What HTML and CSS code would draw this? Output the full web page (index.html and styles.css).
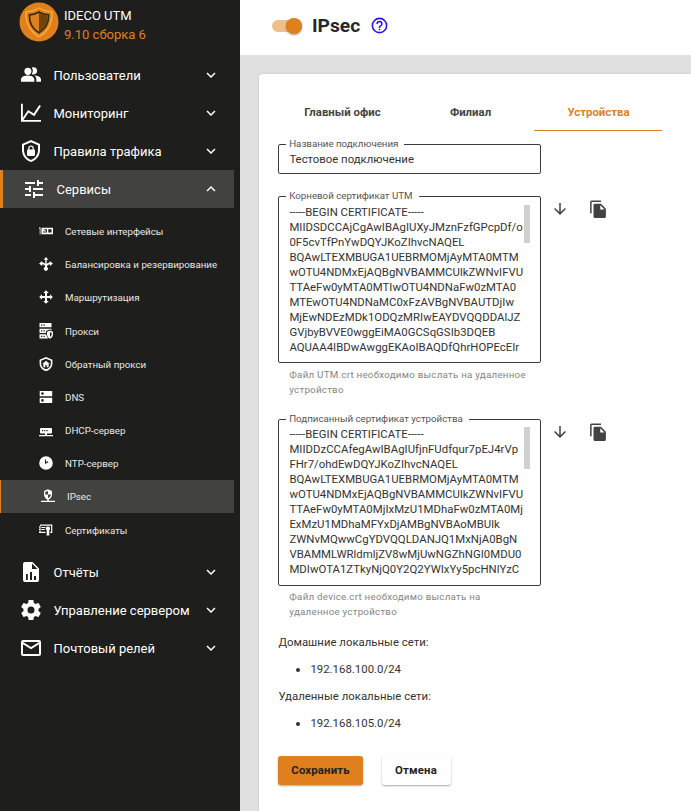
FILE: index.html
```html
<!DOCTYPE html>
<html lang="ru">
<head>
<meta charset="utf-8">
<title>IPsec</title>
<link rel="stylesheet" href="styles.css">
</head>
<body>
<svg width="0" height="0" class="defs">
  <symbol id="down" viewBox="0 0 24 24"><path d="M7.41 8.59 12 13.17l4.59-4.58L18 10l-6 6-6-6z"/></symbol>
  <symbol id="up" viewBox="0 0 24 24"><path d="M7.41 15.41 12 10.83l4.59 4.58L18 14l-6-6-6 6z"/></symbol>
  <symbol id="arrow" viewBox="0 0 24 24"><path d="M11 4h2v12l5.500-5.500 1.420 1.420L12 19.840l-7.920-7.920L5.500 10.500 11 16z"/></symbol>
  <symbol id="copy" viewBox="0 0 24 24"><path d="M16 .500H3.500a2 2 0 0 0-2 2v15h2v-15H16z"/><path fill-rule="evenodd" d="M8 5h8l6.500 6.500V22a2 2 0 0 1-2 2H8a2 2 0 0 1-2-2V7c0-1.100.9-2 2-2zm7 7.500h5.500L15 7z"/></symbol>
</svg>
<div class="app">
  <aside class="sidebar">
    <header class="brand">
      <svg class="logo" viewBox="0 0 40 40"><circle cx="20" cy="20" r="19.500" fill="#e07f1d"/><path d="M20 6c4 2.500 8 3.600 13 3.800.6 11.200-3.500 19.200-13 25C10.500 29 6.400 21 7 9.800 12 9.600 16 8.500 20 6z" fill="#e07f1d" stroke="#fbad35" stroke-width="1.400"/><path d="M20 10c3 1.800 6 2.700 9.600 2.900.3 8-2.500 13.700-9.600 17.900-7.100-4.200-9.900-9.900-9.600-17.900C14 12.700 17 11.800 20 10z" fill="#e07f1d" stroke="#302818" stroke-width="1.600"/><path d="M20 10.800c2.700 1.500 5.500 2.500 8.800 2.800.2 7.300-2.300 12.400-8.800 16.300z" fill="#704407"/></svg>
      <div class="brand-text"><div>IDECO UTM</div><div class="version">9.10 сборка 6</div></div>
    </header>
    <nav>
      <a class="item"><svg class="icon" viewBox="0 0 24 24"><path d="M16 17v3H0v-3s0-4.500 8-4.500S16 17 16 17M12.500 7A4.300 4.300 0 1 1 4 7a4.300 4.300 0 0 1 8.500 0m3.440 5.500A5.600 5.600 0 0 1 18.400 17v3H24v-3s0-4-8.060-4.500M15 2.700c-.8 0-1.500.2-2.100.6a6.300 6.300 0 0 1 0 7.400c.6.4 1.300.6 2.100.6a4.300 4.300 0 0 0 0-8.600z"/></svg><span>Пользователи</span><svg class="chev"><use href="#down"/></svg></a>
      <a class="item"><svg class="icon" viewBox="0 0 24 24"><path d="M0 1h2.200v16.800l6.300-9.400 6.700 4.300L22 2.400l1.900 1.200-7.900 12.200-6.900-4.300L3 20.300h21v2.200H0z"/></svg><span>Мониторинг</span><svg class="chev"><use href="#down"/></svg></a>
      <a class="item"><svg class="icon tall" viewBox="0 0 24 24"><path d="M12 1 3 5v6c0 5.550 3.840 10.740 9 12 5.160-1.260 9-6.450 9-12V5zm0 2.200 7 3.100V11c0 4.500-3 8.700-7 9.900C8 19.700 5 15.500 5 11V6.300z"/><path d="M12 6.500A2.900 2.900 0 0 0 9.200 9.400v1.100c-.7 0-1.200.5-1.200 1.100v4.200c0 .7.500 1.200 1.200 1.200h5.600c.7 0 1.200-.5 1.200-1.200v-4.200c0-.6-.5-1.100-1.200-1.100V9.400A2.900 2.900 0 0 0 12 6.500m0 1.300c.8 0 1.500.5 1.500 1.400v1.300h-3V9.200c0-.9.700-1.400 1.500-1.400"/></svg><span>Правила трафика</span><svg class="chev"><use href="#down"/></svg></a>
      <a class="item active"><svg class="icon tall" viewBox="0 0 24 24"><path d="M3 17v2h6v-2zM3 5v2h10V5zm10 16v-2h8v-2h-8v-2h-2v6zM7 9v2H3v2h4v2h2V9zm14 4v-2H11v2zm-6-4h2V7h4V5h-4V3h-2z"/></svg><span>Сервисы</span><svg class="chev"><use href="#up"/></svg></a>
      <div class="sub">
        <a class="subitem"><svg class="sicon" viewBox="0 0 14 14"><path fill-rule="evenodd" d="M0 3.500h1.500v7H.7v-6H0zM2.500 3.800H14v6.400H2.500zM4 5.300v3.200h4V5.300zm5.300 0v3.200h3.200V5.300z"/><path d="M4 5.300h1.500v1.200h1.800v1H4z"/></svg><span>Сетевые интерфейсы</span></a>
        <a class="subitem"><svg class="sicon" viewBox="0 0 14 14"><path d="m7 0 2.300 2.700H7.700v2.600L7.500 7Q8.700 5.700 10.700 5.600V4l3.200 2.400L11 9V7.300Q8.200 7.500 7.800 9.900a2 2 0 1 1-1.800 0Q6.200 7.500 3.200 7.300V9L.1 6.400 3.200 4v1.600q1.900.1 3.100 1.100V2.700H4.700z"/></svg><span>Балансировка и резервирование</span></a>
        <a class="subitem"><svg class="sicon" viewBox="0 0 14 14"><path d="m7 .2 2.700 2.700H8v3.200h3.100V4.300L13.800 7l-2.700 2.700V7.900H8v3.200h1.700L7 13.800l-2.700-2.700H6V7.900H2.900v1.800L.2 7l2.700-2.700v1.800H6V2.900H4.300z"/></svg><span>Маршрутизация</span></a>
        <a class="subitem"><svg class="sicon server" viewBox="0 0 14 16"><path fill-rule="evenodd" d="M.5 0h12v4.300H.5zM2 1.500v1.200h1.300V1.500zm2.500 0v1.200h1.300V1.500zM.5 5.700h12V7l-2-.5L7 8v2H.5zM2 7.200v1.200h1.300V7.200zm2.500 0v1.200h1.300V7.200zM.5 11.300h6.700c.3 1.700 1 3 2 4.200H.5zM2 12.800V14h1.300v-1.200zm2.500 0V14h1.300v-1.200z"/><path fill-rule="evenodd" d="m11 7.500 3 1.300v2.400c0 2-1.200 3.600-3 4.500-1.800-.9-3-2.500-3-4.500V8.800zm0 1.700v4.700c1.200-.7 1.700-1.700 1.700-2.800V9.800z"/></svg><span>Прокси</span></a>
        <a class="subitem"><svg class="sicon server" viewBox="0 0 24 24"><path fill-rule="evenodd" d="M12 0 1 4.500V11c0 6 4.500 11.500 11 13 6.500-1.500 11-7 11-13V4.500zm0 3 8.300 3.400V11c0 4.700-3.400 8.900-8.300 10.200C7.100 19.900 3.700 15.700 3.700 11V6.400z"/><path d="M12 6.500 5.500 12h2v5.500h3.300v-3.600h2.400v3.600h3.300V12h2z"/></svg><span>Обратный прокси</span></a>
        <a class="subitem"><svg class="sicon" viewBox="0 0 14 14"><path fill-rule="evenodd" d="M.7 1h12.500v5.200H.7zM.7 7.800h12.500V13H.7zM3.500 2.200a1.300 1.300 0 1 0 0 2.600 1.300 1.300 0 0 0 0-2.600zm0 6.900a1.300 1.300 0 1 0 0 2.600 1.300 1.300 0 0 0 0-2.600z"/></svg><span>DNS</span></a>
        <a class="subitem"><svg class="sicon" viewBox="0 0 14 14"><path fill-rule="evenodd" d="M2 5h10q1 0 1 1v3.500q0 1-1 1H8v1.400h6v1.300H0v-1.300h6v-1.400H2q-1 0-1-1V6q0-1 1-1zm1 2v1.300h1.200V7zm2.200 0v1.300h1.200V7zm2.200 0v1.300h1.200V7z"/></svg><span>DHCP-сервер</span></a>
        <a class="subitem"><svg class="sicon" viewBox="0 0 14 14"><path fill-rule="evenodd" d="M7 .2a6.800 6.800 0 1 0 0 13.600A6.800 6.800 0 0 0 7 .2zM6 3.500h1.100v2.800l1.700-1 .7 1L6 8z"/></svg><span>NTP-сервер</span></a>
        <a class="subitem active"><svg class="sicon" viewBox="0 0 14 14"><path d="M7 .3 3 1.900v3.300c0 2.500 1.500 4.400 3.300 5.200v1.300H0V13h14v-1.300H7.700v-1.300C9.500 9.600 11 7.700 11 5.200V1.900zM7 2v3.500h2.800C9.600 7.300 8.600 8.500 7 9.200V5.500H4.200V3z" fill-rule="evenodd"/></svg><span>IPsec</span></a>
        <a class="subitem"><svg class="sicon" viewBox="0 0 14 14"><path fill-rule="evenodd" d="M1 1.500h12.300V10h-2V8.700h.8v-6H1.500v6h5V10H0V8.500h.7V7H0V5.800h.7V4.500H0V3.300h1z"/><path d="M2.300 4h4v1h-4zm0 2h3.500v1H2.300zM9 3.500a2 2 0 0 1 1.300 3.600v6L9 12l-1.300 1.200v-6A2 2 0 0 1 9 3.500z"/></svg><span>Сертификаты</span></a>
      </div>
      <a class="item"><svg class="icon" viewBox="0 0 20 20"><path fill-rule="evenodd" d="M11.500 0H4a2 2 0 0 0-2 2v16a2 2 0 0 0 2 2h12a2 2 0 0 0 2-2V6.500zM11 7V1.500L16.500 7zM6.800 18H5v-6h1.800zm4.200 0H9v-8h2zm4 0h-2v-4h2z"/></svg><span>Отчёты</span><svg class="chev"><use href="#down"/></svg></a>
      <a class="item"><svg class="icon tall" viewBox="0 0 24 24"><path d="M12 15.500A3.500 3.500 0 0 1 8.500 12 3.500 3.500 0 0 1 12 8.500a3.500 3.500 0 0 1 3.500 3.500 3.500 3.500 0 0 1-3.500 3.500m7.430-2.530c.04-.32.07-.64.07-.97s-.03-.66-.07-1l2.110-1.630c.19-.15.24-.42.12-.64l-2-3.460c-.12-.22-.39-.31-.61-.22l-2.490 1c-.52-.39-1.060-.73-1.690-.98l-.37-2.650A.506.506 0 0 0 14 2h-4c-.25 0-.46.18-.5.42l-.37 2.650c-.63.25-1.170.59-1.690.98l-2.490-1c-.22-.09-.49 0-.61.22l-2 3.460c-.13.22-.07.49.12.64L4.570 11c-.04.34-.07.67-.07 1s.03.65.07.97l-2.110 1.660c-.19.15-.25.42-.12.64l2 3.460c.12.22.39.3.61.22l2.490-1.010c.52.4 1.060.74 1.690.99l.37 2.650c.04.24.25.42.5.42h4c.25 0 .46-.18.5-.42l.37-2.650c.63-.26 1.170-.59 1.690-.99l2.490 1.010c.22.08.49 0 .61-.22l2-3.460c.12-.22.07-.49-.12-.64z"/></svg><span>Управление сервером</span><svg class="chev"><use href="#down"/></svg></a>
      <a class="item"><svg class="icon tall" viewBox="0 0 24 24"><path d="M4 4h16a2 2 0 0 1 2 2v12a2 2 0 0 1-2 2H4a2 2 0 0 1-2-2V6a2 2 0 0 1 2-2m8 7 8-5H4zm-8 7h16V8.370l-8 4.990-8-4.990z"/></svg><span>Почтовый релей</span><svg class="chev"><use href="#down"/></svg></a>
    </nav>
  </aside>
  <main>
    <header class="top">
      <div class="switch"><i></i></div>
      <h1>IPsec</h1>
      <svg class="help" viewBox="0 0 24 24"><path d="M11 18h2v-2h-2zm1-16A10 10 0 0 0 2 12a10 10 0 0 0 10 10 10 10 0 0 0 10-10A10 10 0 0 0 12 2m0 18a8 8 0 1 1 0-16 8 8 0 0 1 0 16m0-14a4 4 0 0 0-4 4h2a2 2 0 1 1 4 0c0 2-3 1.750-3 5h2c0-2.250 3-2.500 3-5a4 4 0 0 0-4-4"/></svg>
    </header>
    <section class="card">
      <div class="tabs"><div class="tab">Главный офис</div><div class="tab">Филиал</div><div class="tab selected">Устройства</div></div>
      <fieldset class="field name"><legend>Название подключения</legend><div>Тестовое подключение</div></fieldset>
      <div class="row">
        <fieldset class="field cert"><legend>Корневой сертификат UTM</legend>
<div class="pem first">-----BEGIN CERTIFICATE-----
MIIDSDCCAjCgAwIBAgIUXyJMznFzfGPcpDf/o
0F5cvTfPnYwDQYJKoZIhvcNAQEL
BQAwLTEXMBUGA1UEBRMOMjAyMTA0MTM
wOTU4NDMxEjAQBgNVBAMMCUlkZWNvIFVU
TTAeFw0yMTA0MTIwOTU4NDNaFw0zMTA0
MTEwOTU4NDNaMC0xFzAVBgNVBAUTDjIw
MjEwNDEzMDk1ODQzMRIwEAYDVQQDDAlJZ
GVjbyBVVE0wggEiMA0GCSqGSIb3DQEB
AQUAA4IBDwAwggEKAoIBAQDfQhrHOPEcEIr</div><i class="scroll"></i></fieldset>
        <div class="actions"><svg class="arrow"><use href="#arrow"/></svg><svg class="copy"><use href="#copy"/></svg></div>
      </div>
      <p class="hint">Файл UTM.crt необходимо выслать на удаленное<br>устройство</p>
      <div class="row">
        <fieldset class="field cert"><legend>Подписанный сертификат устройства</legend>
<div class="pem">-----BEGIN CERTIFICATE-----
MIIDDzCCAfegAwIBAgIUfjnFUdfqur7pEJ4rVp
FHr7/ohdEwDQYJKoZIhvcNAQEL
BQAwLTEXMBUGA1UEBRMOMjAyMTA0MTM
wOTU4NDMxEjAQBgNVBAMMCUlkZWNvIFVU
TTAeFw0yMTA0MjIxMzU1MDhaFw0zMTA0Mj
ExMzU1MDhaMFYxDjAMBgNVBAoMBUlk
ZWNvMQwwCgYDVQQLDANJQ1MxNjA0BgN
VBAMMLWRldmljZV8wMjUwNGZhNGI0MDU0
MDIwOTA1ZTkyNjQ0Y2Q2YWIxYy5pcHNlYzC</div><i class="scroll long"></i></fieldset>
        <div class="actions"><svg class="arrow"><use href="#arrow"/></svg><svg class="copy"><use href="#copy"/></svg></div>
      </div>
      <p class="hint last">Файл device.crt необходимо выслать на<br>удаленное устройство</p>
      <div class="nets">
        <p>Домашние локальные сети:</p>
        <ul><li>192.168.100.0/24</li></ul>
        <p>Удаленные локальные сети:</p>
        <ul><li>192.168.105.0/24</li></ul>
      </div>
      <div class="buttons"><button class="save">Сохранить</button><button class="cancel">Отмена</button></div>
    </section>
  </main>
</div>
</body>
</html>
```
FILE: styles.css
```css
* { box-sizing: border-box; }
body { margin: 0; font-family: Roboto, sans-serif; font-size: 12px; color: #333; overflow: hidden; }
.defs { display: none; }
svg { fill: currentColor; flex: none; }
.app { display: flex; height: 811px; }

.sidebar { width: 240px; flex: none; background: #1e1e1c; color: #fff; }
.brand { height: 56px; display: flex; padding: 2.3px 0 0 18.5px; gap: 4.5px; }
.logo { width: 40px; height: 40px; }
.brand-text { font-size: 13px; line-height: 19px; padding: 3.7px 0 0 1px; }
.version { color: #e07f1d; }
.item { display: flex; align-items: center; width: 234px; height: 38px; padding: 0 14px 0 21px; font-size: 13px; }
.item span { margin-left: 12.5px; flex: 1; }
.icon { width: 20px; height: 20px; }
.icon.tall { width: 24px; height: 24px; margin: 0 -2px; }
.chev { width: 18px; height: 18px; }
.item.active { background: #424240; border-left: 3px solid #e07f1d; }
.sub { padding: 6.4px 0 7px; }
.subitem { display: flex; align-items: center; gap: 12px; width: 234px; height: 33.2px; padding-left: 39px; font-size: 9.75px; color: #e8e8e8; }
.subitem span { padding-top: 1px; }
.subitem.active { background: #424240; border-left: 1px solid #e07f1d; padding-left: 40px; gap: 12px; }
.sicon { width: 14px; height: 14px; color: #fff; }
.sicon.server { height: 16px; }

main { flex: 1; background: #e1e1e1; min-width: 0; }
.top { height: 55px; background: #fff; display: flex; align-items: center; padding: 0 0 3px 32px; }
.switch { width: 30px; height: 12px; border-radius: 6px; background: #efc08a; display: flex; justify-content: flex-end; align-items: center; }
.switch i { width: 16px; height: 16px; border-radius: 50%; background: #e07f1d; box-shadow: 0 1px 2px rgba(0,0,0,.4); }
h1 { font-size: 19.2px; font-weight: 700; margin: -1px 0 0 10px; color: #272727; }
.help { width: 19px; height: 19px; color: #2b12ee; margin: -1px 0 0 10px; }
.card { margin: 19px 0 0 19px; height: 760px; background: #fff; border-radius: 4px 0 0; padding: 19px 0 0 19px; box-shadow: 0 0 3px rgba(0,0,0,.15); }
.tabs { display: flex; height: 38px; }
.tab { width: 128px; display: flex; align-items: center; justify-content: center; padding: 1px 0 0 1px; font-size: 11.375px; font-weight: 700; color: #444; letter-spacing: .02px; border-bottom: 1px solid transparent; }
.tab.selected { color: #e07f1d; border-color: #e07f1d; }
.field { position: relative; width: 263px; margin: 0; border: 1px solid #3c3c3c; border-radius: 2px; padding: 0 10px; min-width: 0; }
legend { font-size: 9.75px; line-height: 12px; color: #555; padding: 0 6px 0 3.2px; margin-left: -3px; letter-spacing: -.02px; }
.name { margin-top: 7px; height: 36px; font-size: 11.375px; }
.name div { line-height: 18px; padding-left: .4px; }
.row { display: flex; }
.cert { height: 173px; }
.name + .row { margin-top: 16px; }
.pem { white-space: pre; font-size: 11.375px; line-height: 15px; margin-top: 2px; padding-left: .4px; letter-spacing: .02px; }
.pem.first { margin-top: 3px; }
.scroll { position: absolute; right: 10px; top: 3px; width: 6px; height: 38px; background: #d0d0d0; }
.scroll.long { top: 2px; height: 42px; }
.actions { display: flex; gap: 20px; padding: 10px 0 0 10px; color: #424242; }
.arrow, .copy { width: 18px; height: 18px; }
.hint { margin: 4px 0 0 11.3px; font-size: 9.75px; line-height: 15px; color: #858585; letter-spacing: .25px; }
.hint + .row { margin-top: 16px; }
.hint.last { margin-top: 3px; }
.nets { margin-top: 16px; padding-left: .4px; font-size: 11.375px; line-height: 15px; letter-spacing: .02px; }
.nets p { margin: 0 0 12px; }
.nets ul { margin: 0 0 12px; padding-left: 32px; }
.buttons { display: flex; gap: 18.5px; margin-top: 25px; }
button { height: 29px; border: 0; border-radius: 3px; font: 700 11.375px Roboto, sans-serif; letter-spacing: .15px; padding: 0 0 1px; color: #222; box-shadow: 0 1px 2px rgba(0,0,0,.35); }
.save { width: 85px; background: #e07f1d; }
.cancel { width: 69px; background: #fff; }
```
